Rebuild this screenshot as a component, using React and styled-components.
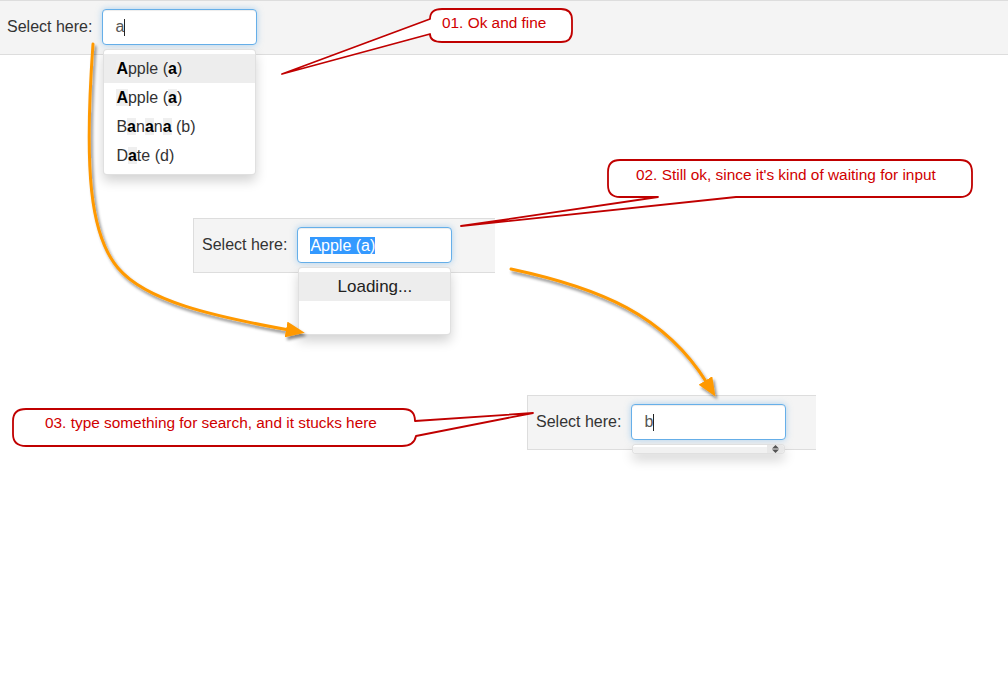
import React from "react";
import styled, { createGlobalStyle } from "styled-components";

const GlobalStyle = createGlobalStyle`
  html, body {
    margin: 0;
    padding: 0;
    background: #fff;
  }
  body {
    font-family: "Liberation Sans", Arial, sans-serif;
  }
`;

const Canvas = styled.div`
  position: relative;
  width: 1008px;
  height: 674px;
  overflow: hidden;
  background: #fff;
`;

// one captured "Select here" bar, placed where it sits on the sheet
const Panel = styled.div`
  position: absolute;
  left: ${(p) => p.$x}px;
  top: ${(p) => p.$y}px;
  width: ${(p) => p.$w}px;
  height: 55px;
  box-sizing: border-box;
  display: flex;
  align-items: center;
  gap: 10px;
  padding: 0 0 1px 8px;
  background: #f4f4f4;
  border: 1px solid #ddd;
  border-right: none;
`;

const Label = styled.span`
  font-size: 16px;
  color: #333;
  white-space: nowrap;
`;

const Field = styled.div`
  position: relative;
  box-sizing: border-box;
  flex: none;
  width: 155px;
  height: 36px;
  padding: 0 12px;
  display: flex;
  align-items: center;
  background: #fff;
  border: 1px solid #66afe9;
  border-radius: 4px;
  box-shadow: inset 0 1px 1px rgba(0, 0, 0, 0.075),
    0 0 6px rgba(102, 175, 233, 0.5);
  font-size: 16px;
  color: #555;
`;

const Caret = styled.span`
  width: 1px;
  height: 17px;
  background: #222;
`;

const Selected = styled.span`
  line-height: 17px;
  background: #3399ff;
  color: #fff;
`;

const Menu = styled.div`
  position: absolute;
  left: 0;
  right: 0;
  top: calc(100% + 5px);
  box-sizing: border-box;
  padding: ${(p) => (p.$flat ? "0" : "4px 0")};
  background: #fff;
  border: 1px solid rgba(0, 0, 0, 0.12);
  border-radius: 4px;
  box-shadow: 0 6px 12px rgba(0, 0, 0, 0.175);
  overflow: hidden;
`;

const Item = styled.div`
  height: 29px;
  line-height: 29px;
  padding: 0 12px;
  font-size: 16px;
  color: #333;
  white-space: nowrap;
  background: ${(p) => (p.$active ? "#ededed" : "transparent")};
`;

const Match = styled.b`
  font-weight: bold;
  color: #000;
  background: #efefef;
`;

const Loading = styled.div`
  height: 29px;
  line-height: 29px;
  text-align: center;
  font-size: 17px;
  color: #222;
  background: ${(p) => (p.$empty ? "transparent" : "#ededed")};
`;

const Stub = styled.div`
  display: flex;
  height: 8px;
`;

const StubTrack = styled.div`
  flex: 1;
  background: linear-gradient(#fff 0 2px, #f1f1f1 2px);
`;

const StubArrows = styled.div`
  width: 17px;
  display: flex;
  align-items: center;
  justify-content: center;
  background: #e8e8e8;
`;

const Overlay = styled.svg`
  position: absolute;
  left: 0;
  top: 0;
  pointer-events: none;
`;

const Note = styled.div`
  position: absolute;
  left: ${(p) => p.$x}px;
  top: ${(p) => p.$y}px;
  font-size: 15.4px;
  line-height: 18px;
  color: #d00000;
  white-space: nowrap;
`;

const fruits = ["Apple (a)", "Apple (a)", "Banana (b)", "Date (d)"];

const highlight = (text, q) =>
  text
    .split(new RegExp(`(${q})`, "i"))
    .map((part, i) =>
      part.toLowerCase() === q ? <Match key={i}>{part}</Match> : part
    );

const bubbles = [
  "M430,19 Q430,9 442,9 L561,9 Q572,9 572,20 L572,31 Q572,42 561,42 L442,42 Q430,42 430,34 L282,74 Z",
  "M658,197 L461,226 L736,197 L960,197 Q972,197 972,185 L972,172 Q972,160 960,160 L620,160 Q608,160 608,172 L608,185 Q608,197 620,197 Z",
  "M415,421 L533,413 L416,436 Q414,446 402,446 L26,446 Q13,446 13,434 L13,421 Q13,409 26,409 L403,409 Q415,409 415,421 Z",
];

const arrows = [
  "M93,44 C84,170 90,235 118,268 S212,316 289,330",
  "M511,269 C600,288 665,315 707,383",
];

export default function App() {
  return (
    <>
      <GlobalStyle />
      <Canvas>
        <Panel $x={-2} $y={0} $w={1012}>
          <Label>Select here:</Label>
          <Field>
            a<Caret />
            <Menu>
              {fruits.map((f, i) => (
                <Item key={i} $active={i === 0}>
                  {highlight(f, "a")}
                </Item>
              ))}
            </Menu>
          </Field>
        </Panel>

        <Panel $x={193} $y={218} $w={302}>
          <Label>Select here:</Label>
          <Field>
            <Selected>Apple (a)</Selected>
            <Menu>
              <Loading>Loading...</Loading>
              <Loading $empty />
            </Menu>
          </Field>
        </Panel>

        <Panel $x={527} $y={395} $w={289}>
          <Label>Select here:</Label>
          <Field>
            b<Caret />
            <Menu $flat>
              <Stub>
                <StubTrack />
                <StubArrows>
                  <svg width="7" height="8" viewBox="0 0 7 8">
                    <path d="M3.5 0 L7 3.4 L0 3.4 Z M3.5 8 L7 4.6 L0 4.6 Z" fill="#555" />
                  </svg>
                </StubArrows>
              </Stub>
            </Menu>
          </Field>
        </Panel>

        <Overlay width="1008" height="674" viewBox="0 0 1008 674">
          <defs>
            <filter id="arrowShade" x="-20%" y="-20%" width="150%" height="150%">
              <feDropShadow dx="2" dy="3" stdDeviation="1.6" floodColor="#000" floodOpacity="0.45" />
            </filter>
            <marker
              id="head"
              markerUnits="userSpaceOnUse"
              markerWidth="19"
              markerHeight="16"
              viewBox="0 0 19 16"
              refX="3"
              refY="8"
              orient="auto"
            >
              <path d="M0,0 L19,8 L0,16 Z" fill="#ff9900" />
            </marker>
          </defs>
          {bubbles.map((d, i) => (
            <path key={i} d={d} fill="#fff" stroke="#c00000" strokeWidth="1.8" strokeLinejoin="round" />
          ))}
          <g filter="url(#arrowShade)">
            {arrows.map((d, i) => (
              <path key={i} d={d} fill="none" stroke="#ff9900" strokeWidth="3" strokeLinecap="round" markerEnd="url(#head)" />
            ))}
          </g>
        </Overlay>

        <Note $x={442} $y={14}>01. Ok and fine</Note>
        <Note $x={636} $y={166}>02. Still ok, since it's kind of waiting for input</Note>
        <Note $x={45} $y={414}>03. type something for search, and it stucks here</Note>
      </Canvas>
    </>
  );
}
